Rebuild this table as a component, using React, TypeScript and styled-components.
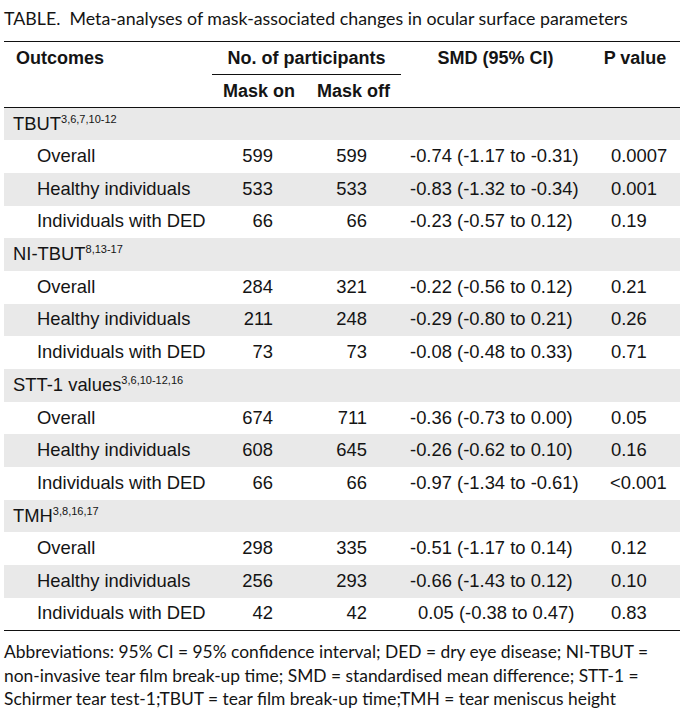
import React from "react";
import styled, { createGlobalStyle } from "styled-components";

const GlobalStyle = createGlobalStyle`
  html, body { margin: 0; padding: 0; background: #ffffff; }
  body { width: 689px; height: 719px; overflow: hidden; }
`;

const Page = styled.div`
  padding: 0 9px 0 4px;
  color: #141414;
`;

const Title = styled.div`
  font-family: Lato, "Open Sans", sans-serif;
  font-size: 17.8px;
  height: 41px;
  line-height: 36px;
  white-space: nowrap;
`;

const Table = styled.table`
  width: 676px;
  border-collapse: collapse;
  table-layout: fixed;
  font-family: "Liberation Sans", Arial, sans-serif;
  font-size: 18.4px;
`;

const Col = styled.col<{ $w: number }>`
  width: ${(p) => p.$w}px;
`;

const HeadRow = styled.tr<{ $top?: boolean; $bottom?: boolean }>`
  height: 33px;
  border-top: ${(p) => (p.$top ? "1px solid #111" : "none")};
  border-bottom: ${(p) => (p.$bottom ? "1px solid #111" : "none")};
`;

const Th = styled.th<{ $align?: string; $pl?: number; $rule?: boolean }>`
  font-weight: bold;
  font-size: 18px;
  text-align: ${(p) => p.$align || "center"};
  padding: 0 0 0 ${(p) => p.$pl || 0}px;
  vertical-align: middle;
  border-bottom: ${(p) => (p.$rule ? "1px solid #111" : "none")};
  white-space: nowrap;
`;

const Row = styled.tr<{ $grey?: boolean; $last?: boolean }>`
  height: 32.7px;
  background: ${(p) => (p.$grey ? "#e9e9e9" : "#ffffff")};
  border-bottom: ${(p) => (p.$last ? "1px solid #111" : "none")};
`;

const Td = styled.td<{ $align?: string; $pl?: number; $pr?: number }>`
  text-align: ${(p) => p.$align || "left"};
  padding: 0 ${(p) => p.$pr || 0}px 1px ${(p) => p.$pl || 0}px;
  vertical-align: middle;
  white-space: nowrap;
`;

const Sup = styled.sup`
  font-size: 11px;
  vertical-align: 7px;
  line-height: 0;
`;

const Footnote = styled.div`
  font-family: Lato, "Open Sans", sans-serif;
  font-size: 17.4px;
  line-height: 23.5px;
  margin-top: 9px;
`;

const FootLine = styled.div`
  white-space: nowrap;
`;

type Sub = { label: string; on: string; off: string; smd: string; p: string };
type Group = { name: string; refs: string; rows: Sub[] };

const groups: Group[] = [
  {
    name: "TBUT",
    refs: "3,6,7,10-12",
    rows: [
      { label: "Overall", on: "599", off: "599", smd: "-0.74 (-1.17 to -0.31)", p: "0.0007" },
      { label: "Healthy individuals", on: "533", off: "533", smd: "-0.83 (-1.32 to -0.34)", p: "0.001" },
      { label: "Individuals with DED", on: "66", off: "66", smd: "-0.23 (-0.57 to 0.12)", p: "0.19" },
    ],
  },
  {
    name: "NI-TBUT",
    refs: "8,13-17",
    rows: [
      { label: "Overall", on: "284", off: "321", smd: "-0.22 (-0.56 to 0.12)", p: "0.21" },
      { label: "Healthy individuals", on: "211", off: "248", smd: "-0.29 (-0.80 to 0.21)", p: "0.26" },
      { label: "Individuals with DED", on: "73", off: "73", smd: "-0.08 (-0.48 to 0.33)", p: "0.71" },
    ],
  },
  {
    name: "STT-1 values",
    refs: "3,6,10-12,16",
    rows: [
      { label: "Overall", on: "674", off: "711", smd: "-0.36 (-0.73 to 0.00)", p: "0.05" },
      { label: "Healthy individuals", on: "608", off: "645", smd: "-0.26 (-0.62 to 0.10)", p: "0.16" },
      { label: "Individuals with DED", on: "66", off: "66", smd: "-0.97 (-1.34 to -0.61)", p: "<0.001" },
    ],
  },
  {
    name: "TMH",
    refs: "3,8,16,17",
    rows: [
      { label: "Overall", on: "298", off: "335", smd: "-0.51 (-1.17 to 0.14)", p: "0.12" },
      { label: "Healthy individuals", on: "256", off: "293", smd: "-0.66 (-1.43 to 0.12)", p: "0.10" },
      { label: "Individuals with DED", on: "42", off: "42", smd: "0.05 (-0.38 to 0.47)", p: "0.83" },
    ],
  },
];

export default function App() {
  const body: React.ReactNode[] = [];
  let i = 0;
  groups.forEach((g, gi) => {
    body.push(
      <Row key={`g${gi}`} $grey={i % 2 === 0}>
        <Td colSpan={5} $pl={9}>
          {g.name}
          <Sup>{g.refs}</Sup>
        </Td>
      </Row>
    );
    i++;
    g.rows.forEach((r, ri) => {
      const last = gi === groups.length - 1 && ri === g.rows.length - 1;
      body.push(
        <Row key={`r${gi}-${ri}`} $grey={i % 2 === 0} $last={last}>
          <Td $pl={33}>{r.label}</Td>
          <Td $align="right" $pr={33}>{r.on}</Td>
          <Td $align="right" $pr={34}>{r.off}</Td>
          <Td $pl={r.smd.startsWith("-") ? 9 : 17}>{r.smd}</Td>
          <Td $pl={r.p.startsWith("<") ? 20 : 21}>{r.p}</Td>
        </Row>
      );
      i++;
    });
  });

  return (
    <Page>
      <GlobalStyle />
      <Title>TABLE.&nbsp; Meta-analyses of mask-associated changes in ocular surface parameters</Title>
      <Table>
        <colgroup>
          <Col $w={208} />
          <Col $w={94} />
          <Col $w={95} />
          <Col $w={189} />
          <Col $w={90} />
        </colgroup>
        <thead>
          <HeadRow $top>
            <Th $align="left" $pl={12}>Outcomes</Th>
            <Th colSpan={2} $rule>No. of participants</Th>
            <Th>SMD (95% CI)</Th>
            <Th>P value</Th>
          </HeadRow>
          <HeadRow $bottom>
            <Th />
            <Th>Mask on</Th>
            <Th>Mask off</Th>
            <Th />
            <Th />
          </HeadRow>
        </thead>
        <tbody>{body}</tbody>
      </Table>
      <Footnote>
        <FootLine>Abbreviations: 95% CI = 95% confidence interval; DED = dry eye disease; NI-TBUT =</FootLine>
        <FootLine>non-invasive tear film break-up time; SMD = standardised mean difference; STT-1 =</FootLine>
        <FootLine>Schirmer tear test-1;TBUT = tear film break-up time;TMH = tear meniscus height</FootLine>
      </Footnote>
    </Page>
  );
}
